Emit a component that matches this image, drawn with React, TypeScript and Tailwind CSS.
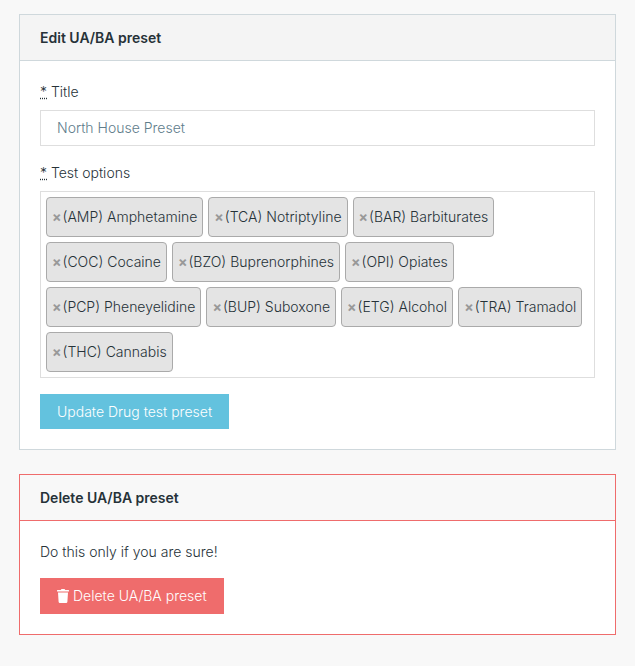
import { ReactNode } from "react";
import { clsx } from "clsx";

const testOptions = [
  "(AMP) Amphetamine",
  "(TCA) Notriptyline",
  "(BAR) Barbiturates",
  "(COC) Cocaine",
  "(BZO) Buprenorphines",
  "(OPI) Opiates",
  "(PCP) Pheneyelidine",
  "(BUP) Suboxone",
  "(ETG) Alcohol",
  "(TRA) Tramadol",
  "(THC) Cannabis",
];

const Card = ({ title, danger, children }: { title: string; danger?: boolean; children: ReactNode }) => (
  <section className={clsx("border bg-white", danger ? "border-[#ef6c6c]" : "border-[#cfd8dc]")}>
    <h2
      className={clsx(
        "border-b px-5 py-3 leading-[21px] font-semibold",
        danger ? "border-[#ef6c6c] bg-[#f8f8f8]" : "border-[#cfd8dc] bg-[#f4f4f4]"
      )}
    >
      {title}
    </h2>
    <div className="p-5">{children}</div>
  </section>
);

const Required = () => (
  <abbr title="required" className="underline decoration-dotted">
    *
  </abbr>
);

const TrashIcon = () => (
  <svg viewBox="0 0 12 14" className="h-3.5 w-3" fill="currentColor" aria-hidden="true">
    <path d="M.4 1H3.7L4.2.3Q4.4 0 4.8 0h2.4q.4 0 .6.3L8.3 1h3.3q.4 0 .4.4v.8q0 .4-.4.4H.4Q0 2.600 0 2.200v-.8Q0 1 .4 1zM1 3.400h10l-.6 9.400q-.1 1.200-1.300 1.200H2.900q-1.200 0-1.300-1.200z" />
  </svg>
);

export default function App() {
  return (
    <main className="min-h-screen bg-[#f8f8f8] px-[19px] pt-3.5 pb-8 font-[Inter,sans-serif] text-sm leading-[21px] font-[350] text-[#263238]">
      <Card title="Edit UA/BA preset">
        <form onSubmit={(e) => e.preventDefault()}>
          <label htmlFor="title" className="mb-2 block">
            <Required /> Title
          </label>
          <input
            id="title"
            type="text"
            defaultValue="North House Preset"
            className="mb-4 block h-9 w-full border border-[#dedede] bg-white px-4 pb-px text-[#607d8b]"
          />
          <div id="options-label" className="mb-2">
            <Required /> Test options
          </div>
          <ul
            aria-labelledby="options-label"
            className="mb-4 flex flex-wrap gap-[5px] border border-[#dedede] p-[5px]"
          >
            {testOptions.map((option) => (
              <li
                key={option}
                className="flex h-10 items-center rounded border border-[#aaa] bg-[#e4e4e4] px-[5px] pb-px"
              >
                <button type="button" aria-label={`Remove ${option}`} className="mr-px font-bold text-[#999]">
                  ×
                </button>
                {option}
              </li>
            ))}
          </ul>
          <button type="submit" className="block h-[35px] bg-[#63c2de] px-[17px] text-white">
            Update Drug test preset
          </button>
        </form>
      </Card>
      <div className="mt-6">
        <Card title="Delete UA/BA preset" danger>
          <p className="mb-4">Do this only if you are sure!</p>
          <button type="button" className="flex h-9 items-center gap-1 bg-[#ef6c6c] px-[17px] pb-px text-white">
            <TrashIcon />
            Delete UA/BA preset
          </button>
        </Card>
      </div>
    </main>
  );
}
